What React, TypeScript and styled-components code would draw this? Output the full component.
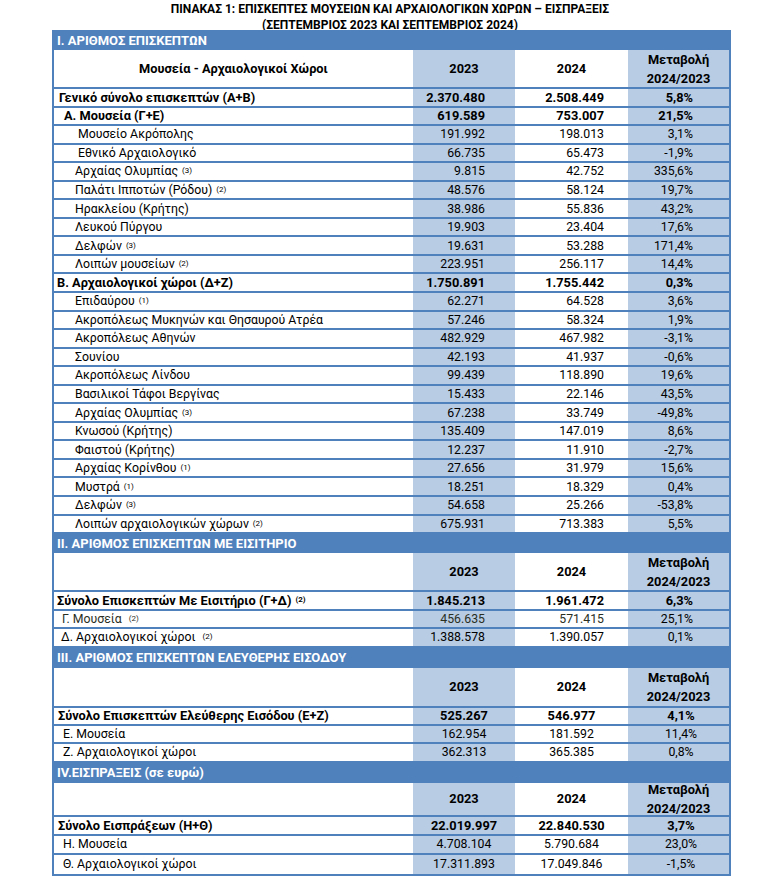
import React from "react";
import styled, { createGlobalStyle } from "styled-components";

const BLUE = "#4f81bd";
const LIGHT = "#b8cce4";

const GlobalStyle = createGlobalStyle`
  html, body { margin: 0; padding: 0; background: #ffffff; }
  body { font-family: Roboto, "Noto Sans", "DejaVu Sans", sans-serif; color: #000; }
`;

const Page = styled.div`
  width: 763px;
  display: flex;
  flex-direction: column;
  align-items: center;
`;

const Title = styled.div`
  font-size: 12px;
  font-weight: 700;
  line-height: 16px;
  text-align: center;
  padding-left: 17px;
  padding-top: 1px;
`;

const Table = styled.div`
  width: 679px;
  box-sizing: border-box;
  border: 2px solid ${BLUE};
  margin-left: 20px;
  margin-top: -3px;
  display: flex;
  flex-direction: column;
`;

const Band = styled.div<{ $h: number }>`
  height: ${(p) => p.$h}px;
  background: ${BLUE};
  color: #ffffff;
  font-size: 13px;
  font-weight: 700;
  line-height: ${(p) => p.$h}px;
  padding-left: 3px;
`;

const Row = styled.div<{ $h: number }>`
  display: grid;
  grid-template-columns: 359px 102px 113px 101px;
  height: ${(p) => p.$h}px;
  box-sizing: border-box;
  border-bottom: 2px solid ${BLUE};
  &:last-child { border-bottom: none; }
`;

const Cell = styled.div<{
  $shade?: boolean;
  $align?: "left" | "right" | "center";
  $pl?: number;
  $pr?: number;
  $bold?: boolean;
  $color?: string;
}>`
  background: ${(p) => (p.$shade ? LIGHT : "#ffffff")};
  display: flex;
  align-items: center;
  justify-content: ${(p) =>
    p.$align === "right" ? "flex-end" : p.$align === "center" ? "center" : "flex-start"};
  text-align: ${(p) => p.$align || "left"};
  padding-left: ${(p) => p.$pl ?? 0}px;
  padding-right: ${(p) => p.$pr ?? 0}px;
  font-size: ${(p) => (p.$bold ? 12.8 : 12.3)}px;
  font-weight: ${(p) => (p.$bold ? 700 : 400)};
  color: ${(p) => p.$color || "#000"};
  white-space: nowrap;
  overflow: hidden;
`;

const HeadText = styled.div`
  font-weight: 700;
  font-size: 12.8px;
  line-height: 19px;
  text-align: center;
`;

const Sup = styled.sup<{ $gap?: boolean }>`
  font-size: 8px;
  vertical-align: 5px;
  margin-left: ${(p) => (p.$gap ? 7 : 4)}px;
  line-height: 0;
`;

type DataRow = {
  label: string;
  sup?: string;
  supGap?: boolean;
  a: string;
  b: string;
  c: string;
  indent: number;
  bold?: boolean;
  color?: string;
};

type Section = {
  title: string;
  bandH: number;
  headLabel?: string;
  headH: number;
  rowH: number;
  centered: boolean;
  rows: DataRow[];
};

const sections: Section[] = [
  {
    title: "I. ΑΡΙΘΜΟΣ ΕΠΙΣΚΕΠΤΩΝ",
    bandH: 18,
    headLabel: "Μουσεία - Αρχαιολογικοί Χώροι",
    headH: 39,
    rowH: 18.55,
    centered: false,
    rows: [
      { label: "Γενικό σύνολο επισκεπτών (Α+Β)", a: "2.370.480", b: "2.508.449", c: "5,8%", indent: 5, bold: true },
      { label: "Α. Μουσεία (Γ+Ε)", a: "619.589", b: "753.007", c: "21,5%", indent: 10, bold: true },
      { label: "Μουσείο Ακρόπολης", a: "191.992", b: "198.013", c: "3,1%", indent: 24 },
      { label: "Εθνικό Αρχαιολογικό", a: "66.735", b: "65.473", c: "-1,9%", indent: 24 },
      { label: "Αρχαίας Ολυμπίας", sup: "(3)", a: "9.815", b: "42.752", c: "335,6%", indent: 21 },
      { label: "Παλάτι Ιπποτών (Ρόδου)", sup: "(2)", a: "48.576", b: "58.124", c: "19,7%", indent: 21 },
      { label: "Ηρακλείου (Κρήτης)", a: "38.986", b: "55.836", c: "43,2%", indent: 21 },
      { label: "Λευκού Πύργου", a: "19.903", b: "23.404", c: "17,6%", indent: 21 },
      { label: "Δελφών", sup: "(3)", a: "19.631", b: "53.288", c: "171,4%", indent: 21 },
      { label: "Λοιπών μουσείων", sup: "(2)", a: "223.951", b: "256.117", c: "14,4%", indent: 21 },
      { label: "Β. Αρχαιολογικοί χώροι (Δ+Ζ)", a: "1.750.891", b: "1.755.442", c: "0,3%", indent: 3, bold: true },
      { label: "Επιδαύρου", sup: "(1)", a: "62.271", b: "64.528", c: "3,6%", indent: 21 },
      { label: "Ακροπόλεως Μυκηνών και Θησαυρού Ατρέα", a: "57.246", b: "58.324", c: "1,9%", indent: 21 },
      { label: "Ακροπόλεως Αθηνών", a: "482.929", b: "467.982", c: "-3,1%", indent: 21 },
      { label: "Σουνίου", a: "42.193", b: "41.937", c: "-0,6%", indent: 21 },
      { label: "Ακροπόλεως Λίνδου", a: "99.439", b: "118.890", c: "19,6%", indent: 21 },
      { label: "Βασιλικοί Τάφοι Βεργίνας", a: "15.433", b: "22.146", c: "43,5%", indent: 21 },
      { label: "Αρχαίας Ολυμπίας", sup: "(3)", a: "67.238", b: "33.749", c: "-49,8%", indent: 21 },
      { label: "Κνωσού (Κρήτης)", a: "135.409", b: "147.019", c: "8,6%", indent: 21 },
      { label: "Φαιστού (Κρήτης)", a: "12.237", b: "11.910", c: "-2,7%", indent: 21 },
      { label: "Αρχαίας Κορίνθου", sup: "(1)", a: "27.656", b: "31.979", c: "15,6%", indent: 21 },
      { label: "Μυστρά", sup: "(1)", a: "18.251", b: "18.329", c: "0,4%", indent: 21 },
      { label: "Δελφών", sup: "(3)", a: "54.658", b: "25.266", c: "-53,8%", indent: 21 },
      { label: "Λοιπών αρχαιολογικών χώρων", sup: "(2)", a: "675.931", b: "713.383", c: "5,5%", indent: 21 },
    ],
  },
  {
    title: "II. ΑΡΙΘΜΟΣ ΕΠΙΣΚΕΠΤΩΝ ΜΕ ΕΙΣΙΤΗΡΙΟ",
    bandH: 19,
    headH: 39,
    rowH: 18.5,
    centered: false,
    rows: [
      { label: "Σύνολο Επισκεπτών Με Εισιτήριο (Γ+Δ)", sup: "(2)", a: "1.845.213", b: "1.961.472", c: "6,3%", indent: 3, bold: true },
      { label: "Γ. Μουσεία", sup: "(2)", supGap: true, a: "456.635", b: "571.415", c: "25,1%", indent: 8, color: "#2a2f1f" },
      { label: "Δ. Αρχαιολογικοί χώροι", sup: "(2)", supGap: true, a: "1.388.578", b: "1.390.057", c: "0,1%", indent: 7 },
    ],
  },
  {
    title: "III. ΑΡΙΘΜΟΣ ΕΠΙΣΚΕΠΤΩΝ ΕΛΕΥΘΕΡΗΣ ΕΙΣΟΔΟΥ",
    bandH: 20,
    headH: 40,
    rowH: 18.3,
    centered: true,
    rows: [
      { label: "Σύνολο Επισκεπτών Ελεύθερης Εισόδου (Ε+Ζ)", a: "525.267", b: "546.977", c: "4,1%", indent: 4, bold: true },
      { label: "Ε. Μουσεία", a: "162.954", b: "181.592", c: "11,4%", indent: 9 },
      { label: "Ζ. Αρχαιολογικοί χώροι", a: "362.313", b: "365.385", c: "0,8%", indent: 9 },
    ],
  },
  {
    title: "IV.ΕΙΣΠΡΑΞΕΙΣ (σε ευρώ)",
    bandH: 20,
    headH: 34,
    rowH: 19,
    centered: true,
    rows: [
      { label: "Σύνολο Εισπράξεων (Η+Θ)", a: "22.019.997", b: "22.840.530", c: "3,7%", indent: 4, bold: true },
      { label: "Η. Μουσεία", a: "4.708.104", b: "5.790.684", c: "23,0%", indent: 9 },
      { label: "Θ. Αρχαιολογικοί χώροι", a: "17.311.893", b: "17.049.846", c: "-1,5%", indent: 9 },
    ],
  },
];

function SectionBlock({ s }: { s: Section }) {
  const nums = s.centered
    ? [
        { align: "center" as const, pl: 0, pr: 0 },
        { align: "center" as const, pl: 0, pr: 0 },
        { align: "center" as const, pl: 5, pr: 0 },
      ]
    : [
        { align: "right" as const, pl: 0, pr: 30 },
        { align: "right" as const, pl: 0, pr: 24 },
        { align: "right" as const, pl: 0, pr: 36 },
      ];
  return (
    <>
      <Band $h={s.bandH}>{s.title}</Band>
      <Row $h={s.headH}>
        <Cell $align="center" $bold>
          {s.headLabel ?? ""}
        </Cell>
        <Cell $shade $align="center" $bold>
          2023
        </Cell>
        <Cell $align="center" $bold>
          2024
        </Cell>
        <Cell $shade $align="center">
          <HeadText>
            Μεταβολή
            <br />
            2024/2023
          </HeadText>
        </Cell>
      </Row>
      {s.rows.map((r, i) => (
        <Row key={i} $h={s.rowH}>
          <Cell $pl={r.indent} $bold={r.bold} $color={r.color}>
            {r.label}
            {r.sup && <Sup $gap={r.supGap}>{r.sup}</Sup>}
          </Cell>
          <Cell $shade $align={nums[0].align} $pl={nums[0].pl} $pr={nums[0].pr} $bold={r.bold} $color={r.color}>
            {r.a}
          </Cell>
          <Cell $align={nums[1].align} $pl={nums[1].pl} $pr={nums[1].pr} $bold={r.bold} $color={r.color}>
            {r.b}
          </Cell>
          <Cell $shade $align={nums[2].align} $pl={nums[2].pl} $pr={nums[2].pr} $bold={r.bold}>
            {r.c}
          </Cell>
        </Row>
      ))}
    </>
  );
}

export default function App() {
  return (
    <>
      <GlobalStyle />
      <Page>
        <Title>
          ΠΙΝΑΚΑΣ 1: ΕΠΙΣΚΕΠΤΕΣ ΜΟΥΣΕΙΩΝ ΚΑΙ ΑΡΧΑΙΟΛΟΓΙΚΩΝ ΧΩΡΩΝ – ΕΙΣΠΡΑΞΕΙΣ
          <br />
          (ΣΕΠΤΕΜΒΡΙΟΣ 2023 ΚΑΙ ΣΕΠΤΕΜΒΡΙΟΣ 2024)
        </Title>
        <Table>
          {sections.map((s, i) => (
            <SectionBlock key={i} s={s} />
          ))}
        </Table>
      </Page>
    </>
  );
}
